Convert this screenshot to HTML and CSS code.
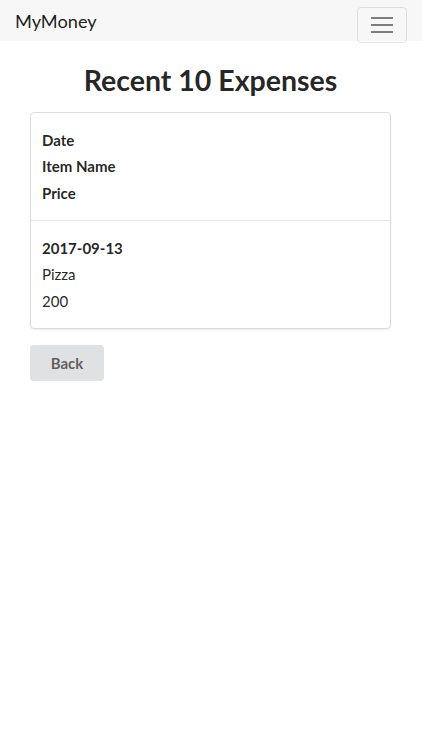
FILE: index.html
```html
<!DOCTYPE html>
<html>
<head>
<meta charset="utf-8">
<link rel="stylesheet" href="styles.css">
</head>
<body>
<nav class="navbar">
  <span class="brand">MyMoney</span>
  <button class="toggler" aria-label="menu">
    <span class="bar"></span><span class="bar"></span><span class="bar"></span>
  </button>
</nav>
<main class="container">
  <h1 class="title">Recent 10 Expenses</h1>
  <div class="card">
    <div class="card-row head">
      <div class="cell">Date</div>
      <div class="cell">Item Name</div>
      <div class="cell">Price</div>
    </div>
    <div class="card-row">
      <div class="cell strong">2017-09-13</div>
      <div class="cell">Pizza</div>
      <div class="cell">200</div>
    </div>
  </div>
  <button class="btn">Back</button>
</main>
</body>
</html>
```
FILE: styles.css
```css
* { box-sizing: border-box; }
html, body { margin: 0; padding: 0; background: #fff; }
body {
  font-family: Lato, "Open Sans", sans-serif;
  font-size: 15px;
  color: rgba(0,0,0,0.87);
}
.navbar {
  height: 41px;
  background: #f7f7f7;
  display: flex;
  align-items: flex-start;
  justify-content: space-between;
  padding: 0 15px;
}
.brand {
  font-size: 18.2px;
  line-height: 20px;
  margin-top: 11px;
  color: rgba(0,0,0,0.9);
}
.toggler {
  margin-top: 7px;
  width: 50px;
  height: 36px;
  border: 1px solid rgba(0,0,0,0.1);
  border-radius: 4px;
  background: transparent;
  display: flex;
  flex-direction: column;
  align-items: center;
  justify-content: center;
  gap: 5px;
  padding: 0;
}
.toggler .bar {
  display: block;
  width: 22px;
  height: 2px;
  background: #7d7d7d;
}
.container {
  padding: 0 31px 0 30px;
}
.title {
  margin: 21px 0 14px;
  text-align: center;
  font-size: 28.5px;
  line-height: 36px;
  font-weight: 700;
  color: rgba(0,0,0,0.87);
}
.card {
  border: 1px solid #dcdcdc;
  border-radius: 4px;
  box-shadow: 0 1px 2px rgba(0,0,0,0.08);
}
.card-row {
  padding: 13.5px 11px;
  display: flex;
  flex-direction: column;
}
.card-row + .card-row {
  border-top: 1px solid #e4e4e4;
  padding-top: 14px;
}
.cell {
  line-height: 26.5px;
}
.head .cell, .strong { font-weight: 700; }
.btn {
  margin-top: 16px;
  width: 74px;
  height: 36px;
  border: none;
  border-radius: 4px;
  background: #e0e1e2;
  color: rgba(0,0,0,0.6);
  font-family: Lato, sans-serif;
  font-size: 15px;
  font-weight: 700;
  padding: 0;
}
```
